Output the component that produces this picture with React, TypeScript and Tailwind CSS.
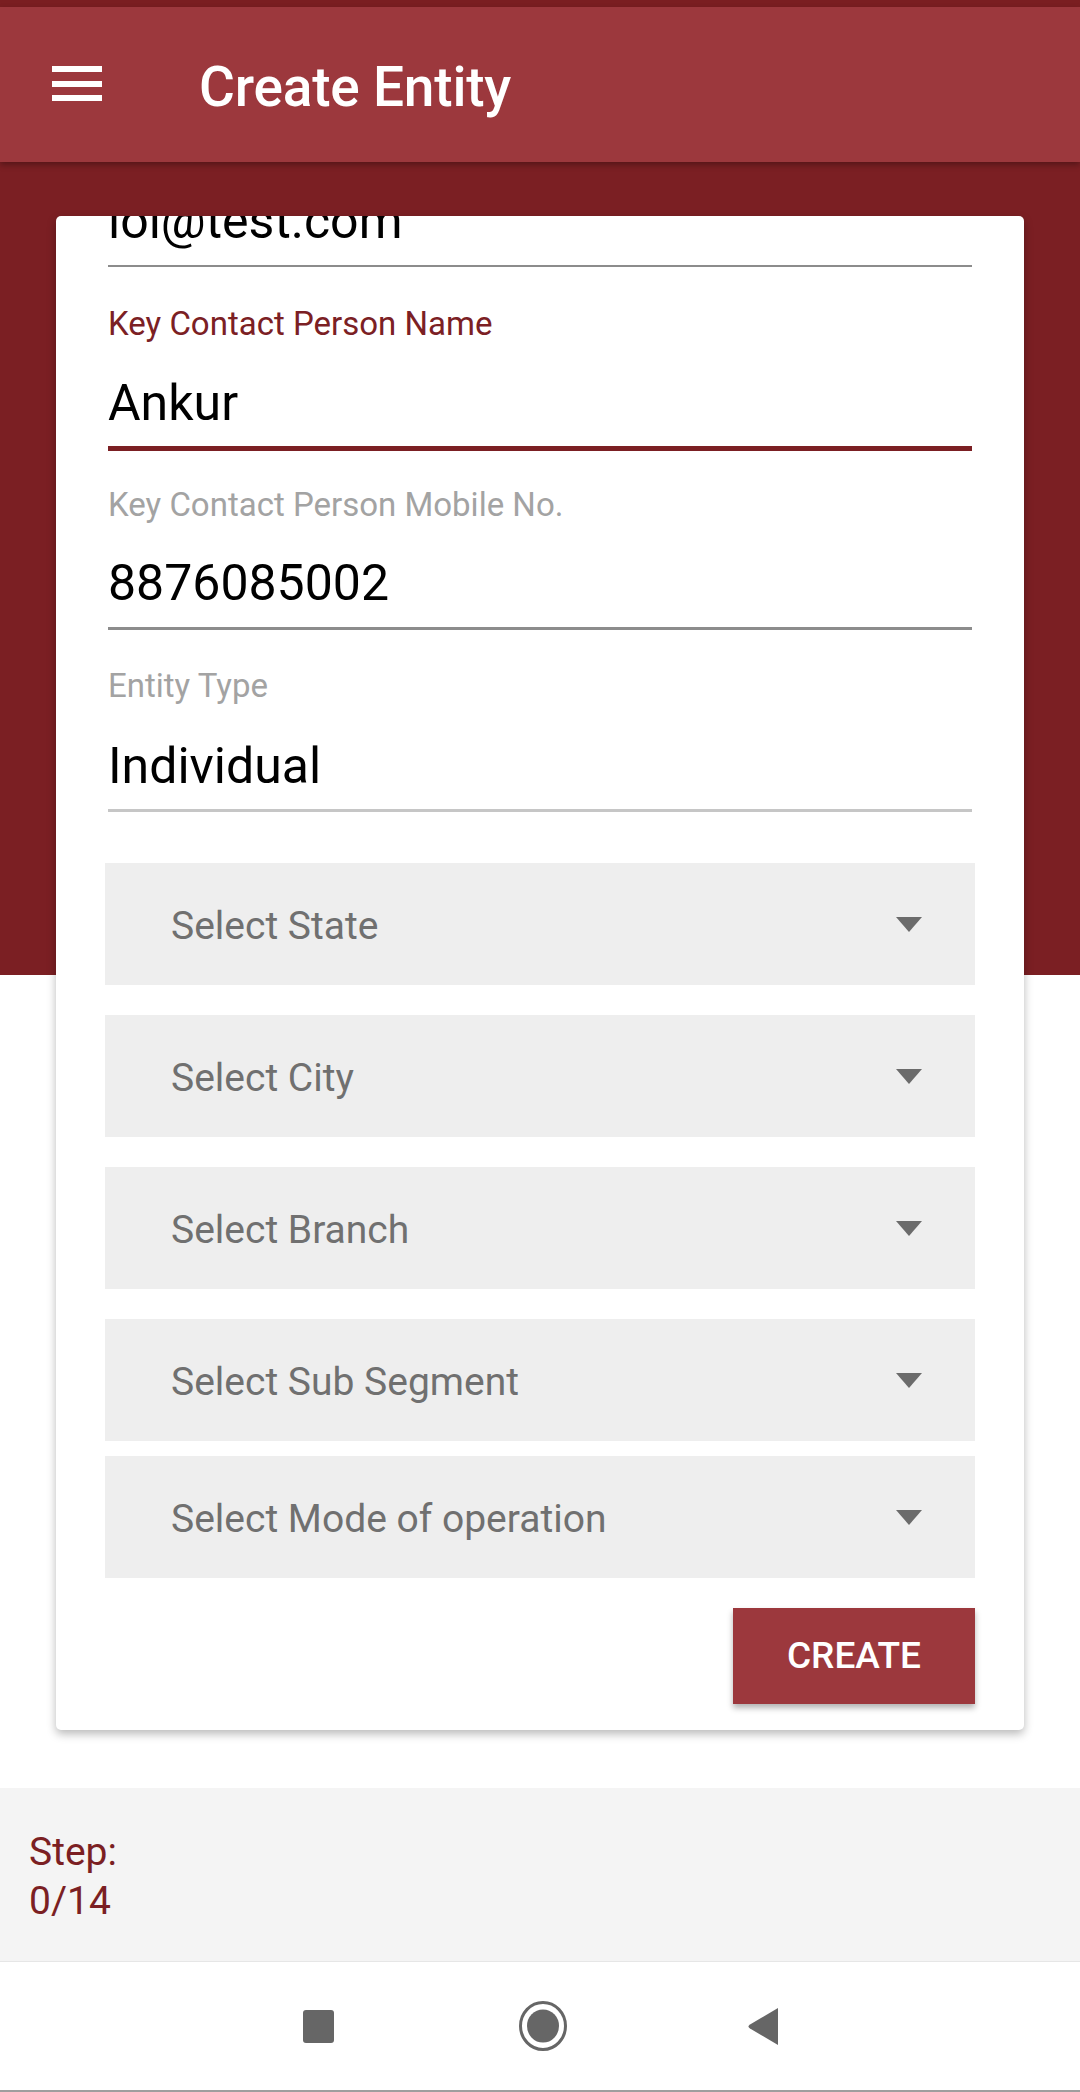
import React from "react";

const selects = [
  { label: "Select State", gap: "mt-[51px]" },
  { label: "Select City", gap: "mt-[30px]" },
  { label: "Select Branch", gap: "mt-[30px]" },
  { label: "Select Sub Segment", gap: "mt-[30px]" },
  { label: "Select Mode of operation", gap: "mt-[15px]" },
];

const Caret = () => (
  <svg width="26" height="15" viewBox="0 0 26 15">
    <polygon points="0,0 26,0 13,15" fill="#6b6b6b" />
  </svg>
);

const App = () => {
  return (
    <div className="w-[1080px] h-[2092px] flex flex-col bg-white overflow-hidden font-['Roboto',sans-serif]">
      {/* status strip */}
      <div className="h-[7px] shrink-0 bg-[#7a1e21]" />

      {/* app bar */}
      <header className="relative z-10 h-[155px] shrink-0 flex items-center bg-[#9c383d] shadow-[0_3px_6px_rgba(0,0,0,0.3)]">
        <svg width="50" height="35" viewBox="0 0 50 35" className="ml-[52px] -mt-[3px]">
          <rect x="0" y="0" width="50" height="6" fill="#fff" />
          <rect x="0" y="15" width="50" height="6" fill="#fff" />
          <rect x="0" y="29" width="50" height="6" fill="#fff" />
        </svg>
        <h1 className="ml-[97px] pt-[5px] text-[55px] font-medium text-white tracking-[-0.2px]">
          Create Entity
        </h1>
      </header>

      {/* body */}
      <main className="h-[1800px] shrink-0 flex flex-col bg-[linear-gradient(to_bottom,#7b1f23_813px,#ffffff_813px)]">
        <section className="shrink-0 mt-[54px] ml-[56px] w-[968px] rounded-[5px] bg-white px-[52px] pb-[26px] shadow-[0_4px_10px_rgba(0,0,0,0.28)] overflow-hidden">
          {/* scrolled-off email field */}
          <div className="h-[49px] overflow-hidden">
            <div className="-mt-[20px] text-[50px] leading-[50px] text-black">lol@test.com</div>
          </div>
          <div className="h-[2px] bg-[#8c8c8c]" />

          {/* focused name field */}
          <div className="pt-[41px] text-[33px] leading-[32px] text-[#7b2024]">Key Contact Person Name</div>
          <div className="mt-[38px] text-[50px] leading-[50px] text-black">Ankur</div>
          <div className="mt-[18px] h-[5px] bg-[#7b1f23]" />

          <div className="pt-[38px] text-[33px] leading-[32px] text-[#a3a3a3]">Key Contact Person Mobile No.</div>
          <div className="mt-[37px] text-[50px] leading-[50px] text-black">8876085002</div>
          <div className="mt-[19px] h-[3px] bg-[#8c8c8c]" />

          <div className="pt-[40px] text-[33px] leading-[32px] text-[#a3a3a3]">Entity Type</div>
          <div className="mt-[39px] text-[50px] leading-[50px] text-black">Individual</div>
          <div className="mt-[18px] h-[3px] bg-[#c6c6c6]" />

          {selects.map((s) => (
            <div
              key={s.label}
              className={`${s.gap} -mx-[3px] h-[122px] flex items-center justify-between bg-[#eeeeee] pl-[66px] pr-[53px]`}
            >
              <span className="pt-[5px] text-[39px] text-[#707070]">{s.label}</span>
              <Caret />
            </div>
          ))}

          <div className="mt-[30px] -mr-[3px] flex justify-end">
            <button className="w-[242px] h-[96px] bg-[#9c383d] text-white text-[37px] font-medium shadow-[0_4px_6px_rgba(0,0,0,0.3)]">
              CREATE
            </button>
          </div>
        </section>

        {/* step band */}
        <div className="mt-auto h-[174px] shrink-0 bg-[#f4f4f4] border-b border-[#e6e6e6] pl-[29px] pt-[40px] text-[39px] leading-[49px] text-[#7b1f23]">
          <div>Step:</div>
          <div>0/14</div>
        </div>
      </main>

      {/* nav bar */}
      <nav className="flex-1 flex flex-col bg-white">
        <div className="flex-1 flex items-center justify-center">
          <div className="w-[31px] h-[33px] rounded-[3px] bg-[#666666]" />
          <svg width="48" height="50" viewBox="0 0 48 50" className="ml-[185px]">
            <ellipse cx="24" cy="25" rx="22.5" ry="23.5" fill="none" stroke="#666666" strokeWidth="3" />
            <ellipse cx="24" cy="25" rx="16" ry="16.5" fill="#666666" />
          </svg>
          <svg width="31" height="37" viewBox="0 0 31 37" className="ml-[180px]">
            <path d="M31 0 L31 37 L3 20.5 Q0 18.5 3 16.5 Z" fill="#666666" />
          </svg>
        </div>
        <div className="h-[2px] bg-[#9e9e9e]" />
      </nav>
    </div>
  );
};

export default App;
